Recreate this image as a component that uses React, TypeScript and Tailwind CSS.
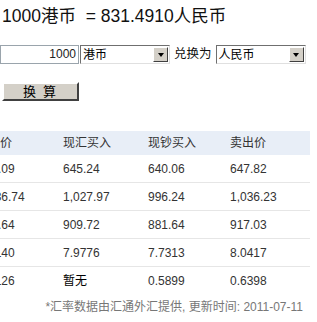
const font = { fontFamily: '"Liberation Sans", Arial, "Noto Sans CJK SC", sans-serif' };

const rows = [
  ['647.09', '645.24', '640.06', '647.82'],
  ['1,036.74', '1,027.97', '996.24', '1,036.23'],
  ['913.64', '909.72', '881.64', '917.03'],
  ['8.0140', '7.9776', '7.7313', '8.0417'],
  ['0.6126', '暂无', '0.5899', '0.6398'],
];

const widths = ['w-[87px]', 'w-[85px]', 'w-[82px]', 'w-[80px]'];

function FakeSelect({ label, w }: { label: string; w: string }) {
  return (
    <div className={`${w} h-[19px] flex items-center bg-white border border-t-[#6f6f6f] border-l-[#6f6f6f] border-r-[#e0e0e0] border-b-[#e0e0e0]`}>
      <span className="flex-1 pl-[2px] text-[12px] leading-none text-black">{label}</span>
      <span className="w-[15px] h-[15px] mr-[1px] bg-[#d4d0c8] border border-t-white border-l-white border-r-[#404040] border-b-[#404040] flex items-center justify-center">
        <span className="w-0 h-0 border-l-[3.5px] border-r-[3.5px] border-t-[4px] border-l-transparent border-r-transparent border-t-black" />
      </span>
    </div>
  );
}

export default function App() {
  return (
    <div className="w-[317px] h-[322px] bg-white overflow-hidden text-black" style={font}>
      {/* result line */}
      <div className="h-[32px] leading-[32px] pl-[2px] text-[17.5px] text-[#111] whitespace-pre">
        1000港币  = 831.4910人民币
      </div>

      {/* converter row */}
      <div className="mt-[13px] flex items-center h-[19px]">
        <div className="w-[79px] h-[19px] border border-[#9aa4ac] text-right pr-[2px] text-[12px] leading-[17px] text-[#222]">
          1000
        </div>
        <div className="ml-[1px]">
          <FakeSelect label="港币" w="w-[90px]" />
        </div>
        <span className="ml-[4px] text-[12.5px] text-[#111]">兑换为</span>
        <div className="ml-[4px]">
          <FakeSelect label="人民币" w="w-[90px]" />
        </div>
      </div>

      {/* button */}
      <button className="mt-[18px] ml-[2px] w-[77px] h-[19px] bg-[#d4d0c8] border-2 border-t-white border-l-white border-r-[#404040] border-b-[#404040] text-[13px] leading-none text-black whitespace-pre flex items-center justify-center pr-[2px]">
        换  算
      </button>

      {/* rates table, first column scrolled out of view */}
      <div className="mt-[30px] w-[334px] -ml-[24px] text-[12px] text-[#333]">
        <div className="h-[24px] bg-[#e8eef7] flex items-center">
          {['中间价', '现汇买入', '现钞买入', '卖出价'].map((h, i) => (
            <div key={h} className={widths[i]}>{h}</div>
          ))}
        </div>
        {rows.map((r, ri) => (
          <div
            key={ri}
            className={`h-[28px] flex items-center ${ri < rows.length - 1 ? 'border-b border-[#e6e6e6]' : ''}`}
          >
            {r.map((c, i) => (
              <div key={i} className={`${widths[i]} ${i === 0 ? 'pl-[2px]' : ''} ${c === '暂无' ? 'text-black' : ''}`}>{c}</div>
            ))}
          </div>
        ))}
      </div>

      <div className="mt-[4px] pr-[14px] text-right text-[12px] leading-[16px] text-[#777]">
        *汇率数据由汇通外汇提供, 更新时间: 2011-07-11
      </div>
    </div>
  );
}
